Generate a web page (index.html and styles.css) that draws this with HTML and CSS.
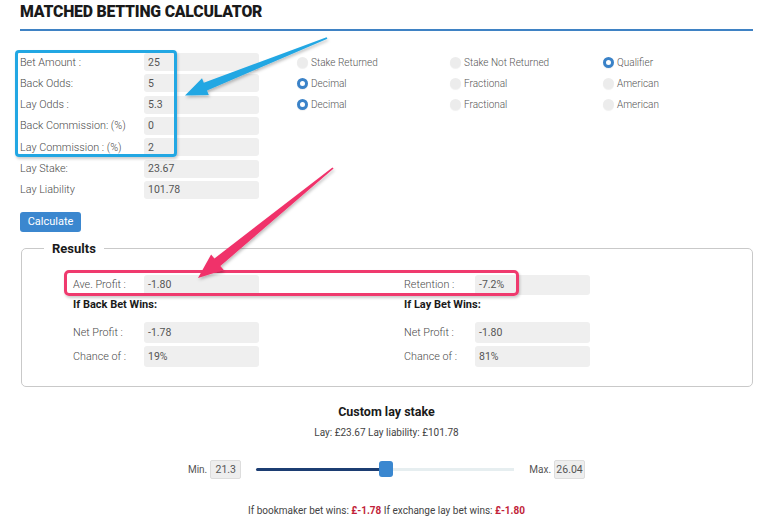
FILE: index.html
```html
<!DOCTYPE html>
<html>
<head>
<meta charset="utf-8">
<link rel="stylesheet" href="styles.css">
</head>
<body>
<div class="page">
  <h1 class="title">MATCHED BETTING CALCULATOR</h1>

  <div class="top">
    <div class="form">
      <span class="lbl">Bet Amount :</span><span class="inp">25</span>
      <span class="lbl">Back Odds:</span><span class="inp">5</span>
      <span class="lbl">Lay Odds :</span><span class="inp">5.3</span>
      <span class="lbl">Back Commission: (%)</span><span class="inp">0</span>
      <span class="lbl">Lay Commission : (%)</span><span class="inp">2</span>
      <span class="lbl">Lay Stake:</span><span class="inp">23.67</span>
      <span class="lbl">Lay Liability</span><span class="inp">101.78</span>
    </div>
    <div class="radios">
      <span class="opt"><i class="radio"></i>Stake Returned</span>
      <span class="opt"><i class="radio"></i>Stake Not Returned</span>
      <span class="opt"><i class="radio on"></i>Qualifier</span>
      <span class="opt"><i class="radio on"></i>Decimal</span>
      <span class="opt"><i class="radio"></i>Fractional</span>
      <span class="opt"><i class="radio"></i>American</span>
      <span class="opt"><i class="radio on"></i>Decimal</span>
      <span class="opt"><i class="radio"></i>Fractional</span>
      <span class="opt"><i class="radio"></i>American</span>
    </div>
  </div>

  <button class="calc">Calculate</button>

  <fieldset class="results">
    <legend>Results</legend>
    <div class="rcols">
      <div class="rcol">
        <div class="rrow first"><span class="rlbl">Ave. Profit :</span><span class="inp tall">-1.80</span></div>
        <div class="rhead">If Back Bet Wins:</div>
        <div class="rrow"><span class="rlbl">Net Profit :</span><span class="inp tall">-1.78</span></div>
        <div class="rrow"><span class="rlbl">Chance of :</span><span class="inp tall">19%</span></div>
      </div>
      <div class="rcol">
        <div class="rrow first"><span class="rlbl">Retention :</span><span class="inp tall">-7.2%</span></div>
        <div class="rhead">If Lay Bet Wins:</div>
        <div class="rrow"><span class="rlbl">Net Profit :</span><span class="inp tall">-1.80</span></div>
        <div class="rrow"><span class="rlbl">Chance of :</span><span class="inp tall">81%</span></div>
      </div>
    </div>
  </fieldset>

  <div class="custom">
    <div class="ctitle">Custom lay stake</div>
    <div class="csub">Lay: £23.67 Lay liability: £101.78</div>
    <div class="slider">
      <span class="sl">Min.</span><span class="sbox">21.3</span>
      <div class="track"><div class="fill"></div><div class="thumb"></div><div class="rest"></div></div>
      <span class="sl">Max.</span><span class="sbox">26.04</span>
    </div>
    <div class="outcome">If bookmaker bet wins: <b>£-1.78</b> If exchange lay bet wins: <b>£-1.80</b></div>
  </div>
</div>

<div class="ann-blue"></div>
<div class="ann-pink"></div>
<svg class="arrows" width="768" height="521" viewBox="0 0 768 521">
  <defs>
    <filter id="sh" x="-20%" y="-20%" width="140%" height="140%">
      <feDropShadow dx="1" dy="2" stdDeviation="1.5" flood-color="#000" flood-opacity="0.25"/>
    </filter>
  </defs>
  <polygon filter="url(#sh)" fill="#22a7e3" points="326.6,37.3 327.4,38.7 207.0,90.5 208.8,94.9 185,95.5 202,78.3 203.8,82.7"/>
  <polygon filter="url(#sh)" fill="#f0336b" points="332.4,167.4 333.6,168.6 220.4,266.0 223.7,270.0 198,278 211.1,254.5 214.4,258.5"/>
</svg>
</body>
</html>
```

FILE: styles.css
```css
* { box-sizing: border-box; }
body {
  margin: 0;
  background: #fff;
  font-family: Roboto, "Liberation Sans", Arial, sans-serif;
  color: #555;
  width: 768px;
  height: 521px;
  overflow: hidden;
  position: relative;
}
.page {
  padding: 0 15px 0 20px;
  width: 768px;
}
.title {
  margin: 0;
  padding: 3px 0 8px;
  font-size: 15.8px;
  line-height: 18px;
  font-weight: 900;
  color: #1a1a1a;
  letter-spacing: -0.2px;
  border-bottom: 2px solid #3f82c4;
}
.top {
  display: flex;
  margin-top: 22px;
}
.form {
  display: grid;
  grid-template-columns: 124px 115px;
  grid-auto-rows: 18px;
  row-gap: 3.33px;
  align-items: center;
}
.lbl {
  font-size: 10.8px;
  color: #4a4a4a;
  font-weight: 300;
}
.inp {
  display: flex;
  align-items: center;
  height: 18px;
  background: #efefef;
  border-radius: 3px;
  padding-left: 4px;
  font-size: 10.5px;
  color: #555;
}
.inp.tall { height: 21px; width: 115px; }
.radios {
  margin-left: 38px;
  display: grid;
  grid-template-columns: 153px 153px 120px;
  grid-auto-rows: 18px;
  row-gap: 3.33px;
  align-items: center;
}
.opt {
  display: flex;
  align-items: center;
  font-size: 10px;
  color: #555;
  font-weight: 300;
}
.radio {
  width: 11px;
  height: 11px;
  border-radius: 50%;
  background: #ececec;
  margin-right: 3px;
  flex: none;
  box-shadow: 0 1px 1px rgba(0,0,0,0.06);
}
.radio.on {
  background: #fff;
  border: 3.5px solid #3a82c8;
}
.calc {
  display: block;
  margin-top: 13px;
  width: 61px;
  height: 20px;
  border: 0;
  border-radius: 3px;
  background: #3b87cf;
  color: #fff;
  font-family: Roboto, "Liberation Sans", Arial, sans-serif;
  font-size: 11px;
  padding: 0;
}
.results {
  margin: 9px 0 0 1px;
  width: 732px;
  border: 1px solid #c9c9c9;
  border-radius: 5px;
  padding: 18px 0 19px 0;
}
.results legend {
  margin-left: 22px;
  padding: 0 8px;
  font-size: 13px;
  line-height: 16px;
  font-weight: 700;
  color: #1a1a1a;
}
.rcols { display: flex; padding-left: 51px; }
.rcol { width: 331px; }
.rrow {
  display: flex;
  align-items: center;
  margin-top: 3px;
}
.rrow.first { margin-top: 0; }
.rrow.first .inp { height: 20px; }
.rlbl {
  width: 71px;
  font-size: 10.8px;
  color: #4a4a4a;
  font-weight: 300;
}
.rhead {
  font-size: 11px;
  font-weight: 700;
  color: #1a1a1a;
  line-height: 14px;
  margin: 3px 0 10px;
}
.custom {
  text-align: center;
  margin-top: 17px;
}
.ctitle {
  font-size: 12.5px;
  line-height: 16px;
  font-weight: 700;
  color: #1a1a1a;
}
.csub {
  margin-top: 6px;
  font-size: 10px;
  line-height: 14px;
  color: #444;
}
.slider {
  margin-top: 20px;
  display: flex;
  justify-content: center;
  align-items: center;
  height: 19px;
}
.sl {
  font-size: 10px;
  color: #555;
  margin-right: 3px;
}
.sbox {
  height: 19px;
  width: 31px;
  display: flex;
  align-items: center;
  justify-content: center;
  background: #eee;
  border: 1px solid #ddd;
  border-radius: 2px;
  font-size: 10.5px;
  color: #555;
}
.track {
  width: 258px;
  margin: 0 15px;
  display: flex;
  align-items: center;
}
.fill {
  width: 123px;
  height: 3px;
  background: #1c3d72;
  border-radius: 2px 0 0 2px;
}
.thumb {
  width: 14px;
  height: 16px;
  background: #3a87d0;
  border-radius: 3px;
  flex: none;
}
.rest {
  flex: 1;
  height: 3px;
  background: #e6eef0;
}
.outcome {
  margin-top: 25px;
  font-size: 10px;
  line-height: 14px;
  color: #444;
}
.outcome b { color: #c21f3a; }
.ann-blue {
  position: absolute;
  left: 15px;
  top: 50px;
  width: 162px;
  height: 107px;
  border: 3px solid #22a7e3;
  border-radius: 4px;
  box-shadow: 1px 2px 3px rgba(0,0,0,0.2);
}
.ann-pink {
  position: absolute;
  left: 64px;
  top: 270px;
  width: 455px;
  height: 26px;
  border: 3px solid #ef3a6e;
  border-radius: 5px;
  box-shadow: 1px 2px 3px rgba(0,0,0,0.2);
}
.arrows {
  position: absolute;
  left: 0;
  top: 0;
  pointer-events: none;
}
```
